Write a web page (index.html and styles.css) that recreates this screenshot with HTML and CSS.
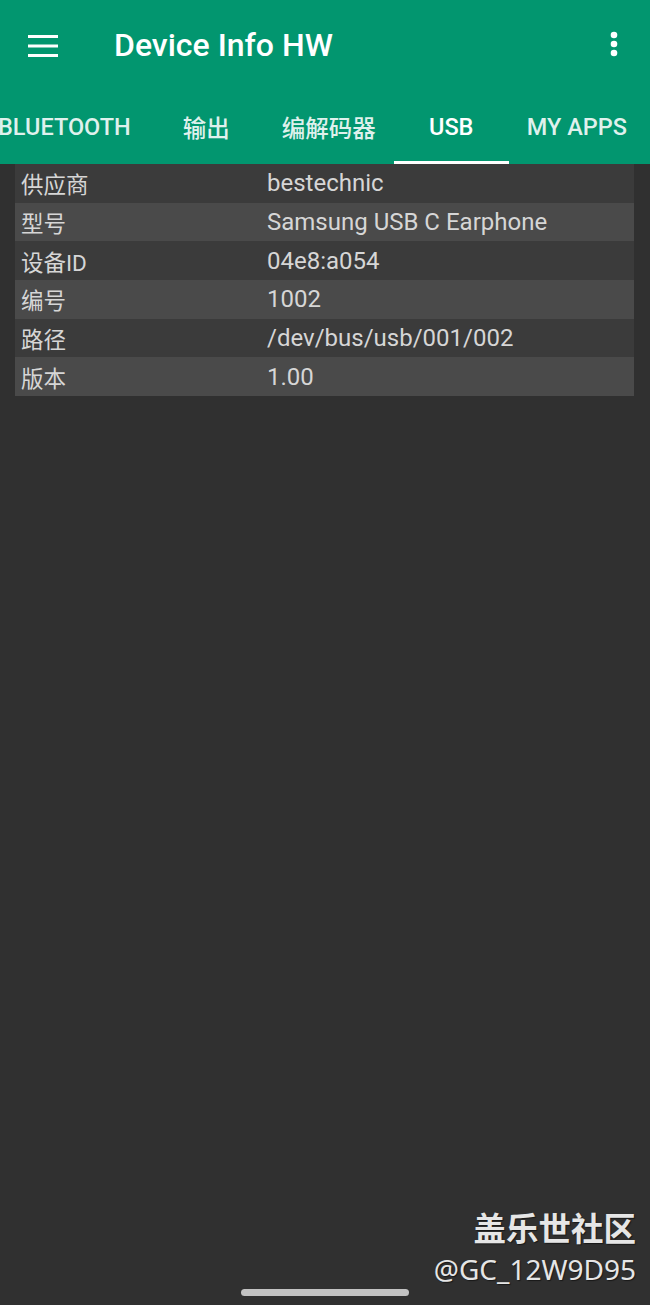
FILE: index.html
```html
<!DOCTYPE html>
<html lang="zh-CN">
<head>
  <meta charset="UTF-8" />
  <meta name="viewport" content="width=device-width, initial-scale=1.0"/>
  <title>Device Info HW</title>
  <link rel="stylesheet" href="styles.css">
</head>
<body>
  <header class="appbar">
    <div class="toolbar">
      <button class="icon-btn menu" aria-label="menu">
        <svg width="30" height="22" viewBox="0 0 30 22">
          <rect x="0" y="0" width="30" height="3" fill="#fff"/>
          <rect x="0" y="9.5" width="30" height="3" fill="#fff"/>
          <rect x="0" y="19" width="30" height="3" fill="#fff"/>
        </svg>
      </button>
      <h1 class="title">Device Info HW</h1>
      <button class="icon-btn more" aria-label="more">
        <svg width="8" height="26" viewBox="0 0 8 26">
          <circle cx="4" cy="4" r="3.3" fill="#fff"/>
          <circle cx="4" cy="13" r="3.3" fill="#fff"/>
          <circle cx="4" cy="22" r="3.3" fill="#fff"/>
        </svg>
      </button>
    </div>

    <nav class="tabs">
      <div class="tab">BLUETOOTH</div>
      <div class="tab">输出</div>
      <div class="tab">编解码器</div>
      <div class="tab active">USB</div>
      <div class="tab">MY APPS</div>
    </nav>
  </header>

  <main class="content">
    <div class="info-table">
      <div class="row"><span class="key">供应商</span><span class="val">bestechnic</span></div>
      <div class="row"><span class="key">型号</span><span class="val">Samsung USB C Earphone</span></div>
      <div class="row"><span class="key">设备ID</span><span class="val">04e8:a054</span></div>
      <div class="row"><span class="key">编号</span><span class="val">1002</span></div>
      <div class="row"><span class="key">路径</span><span class="val">/dev/bus/usb/001/002</span></div>
      <div class="row"><span class="key">版本</span><span class="val">1.00</span></div>
    </div>
  </main>

  <footer class="bottom">
    <div class="watermark">
      <div class="wm-site">盖乐世社区</div>
      <div class="wm-user">@GC_12W9D95</div>
    </div>
    <div class="home-bar"></div>
  </footer>
</body>
</html>
```

FILE: styles.css
```css
html, body {
  margin: 0;
  padding: 0;
}
body {
  width: 650px;
  height: 1305px;
  overflow: hidden;
  background: #303030;
  font-family: Roboto, "Noto Sans CJK SC", sans-serif;
  display: flex;
  flex-direction: column;
}

.appbar {
  background: #02966f;
  height: 164px;
  color: #fff;
  overflow: hidden;
}
.toolbar {
  height: 90px;
  display: flex;
  align-items: center;
}
.icon-btn {
  background: none;
  border: 0;
  padding: 0;
  display: flex;
  align-items: center;
}
.menu {
  margin-left: 28px;
  margin-top: 1px;
}
.title {
  margin: 0 0 0 56px;
  font-size: 32px;
  font-weight: 500;
  flex: 1;
}
.more {
  margin-right: 32px;
  margin-top: -2px;
}

.tabs {
  display: flex;
  height: 74px;
  margin-left: -20px;
}
.tab {
  flex: none;
  min-width: 115px;
  padding: 0 18px;
  box-sizing: border-box;
  display: flex;
  align-items: center;
  justify-content: center;
  font-size: 23.5px;
  font-weight: 500;
  color: rgba(255, 255, 255, 0.88);
  white-space: nowrap;
  border-bottom: 3px solid transparent;
  padding-top: 3px;
}
.tab.active {
  color: #fff;
  border-bottom-color: #fff;
}

.content {
  flex: 1;
}
.info-table {
  margin: 0 16px 0 15px;
}
.row {
  display: grid;
  grid-template-columns: 252px 1fr;
  height: 38.67px;
  align-items: center;
  font-size: 22.5px;
  color: #d6d6d6;
  background: #3b3b3b;
}
.row:nth-child(even) {
  background: #4a4a4a;
}
.key {
  padding-left: 6px;
}
.val {
  font-size: 24px;
}

.bottom {
  display: flex;
  flex-direction: column;
  align-items: center;
  padding-bottom: 9px;
}
.watermark {
  align-self: flex-end;
  margin-right: 14px;
  text-align: right;
  color: #e6e6e6;
  text-shadow: 1px 1px 1px rgba(0, 0, 0, 0.5);
  font-family: "Noto Sans", "Noto Sans CJK SC", sans-serif;
}
.wm-site {
  font-size: 32.5px;
  font-weight: 700;
  line-height: 44px;
}
.wm-user {
  font-size: 28px;
  line-height: 36px;
  margin-bottom: 2px;
}
.home-bar {
  width: 168px;
  height: 7px;
  border-radius: 4px;
  background: #c2c2c2;
}
```
